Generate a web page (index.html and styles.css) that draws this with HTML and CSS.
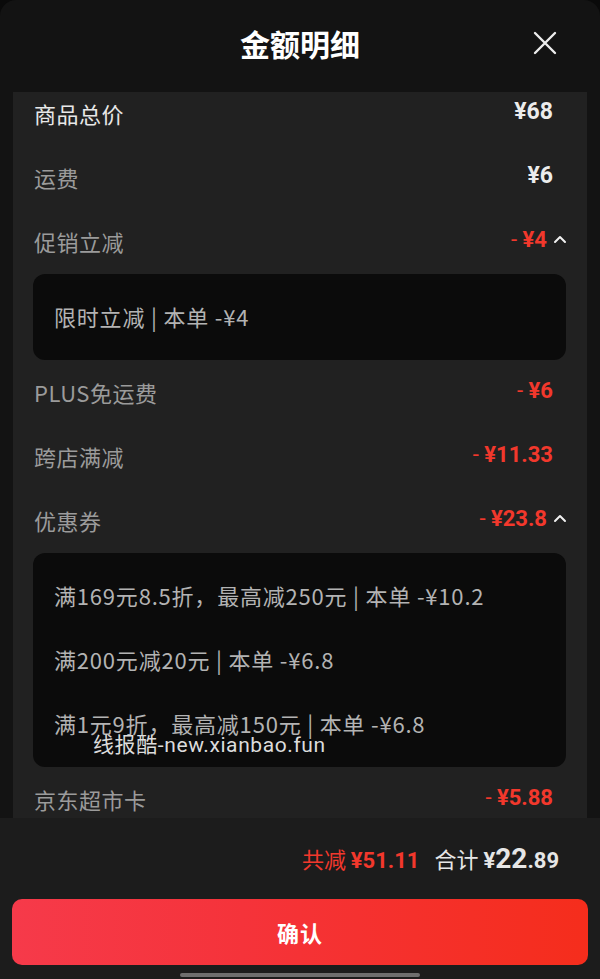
FILE: index.html
```html
<!DOCTYPE html>
<html lang="zh-CN">
<head>
<meta charset="utf-8">
<title>金额明细</title>
<link rel="stylesheet" href="styles.css">
</head>
<body>
<div class="sheet">
  <header class="header">
    <span class="spacer"></span>
    <h1 class="title">金额明细</h1>
    <button class="close" aria-label="关闭">
      <svg width="24" height="24" viewBox="0 0 24 24"><path d="M2 2 L22 22 M22 2 L2 22" stroke="#ededed" stroke-width="2.4" stroke-linecap="round" fill="none"/></svg>
    </button>
  </header>

  <section class="panel">
    <div class="row">
      <span class="label label-main">商品总价</span>
      <span class="value value-white">¥68</span>
    </div>
    <div class="row">
      <span class="label">运费</span>
      <span class="value value-white">¥6</span>
    </div>
    <div class="row">
      <span class="label">促销立减</span>
      <span class="value-group"><span class="value value-red"><span class="minus">-</span> ¥4</span><span class="chev"><svg width="14" height="10" viewBox="0 0 14 10"><path d="M2 8 L7 3 L12 8" stroke="#f0f0f0" stroke-width="2" fill="none" stroke-linecap="round" stroke-linejoin="round"/></svg></span></span>
    </div>
    <div class="detail">
      <p class="detail-line">限时立减 | 本单 -¥4</p>
    </div>
    <div class="row">
      <span class="label">PLUS免运费</span>
      <span class="value value-red"><span class="minus">-</span> ¥6</span>
    </div>
    <div class="row">
      <span class="label">跨店满减</span>
      <span class="value value-red"><span class="minus">-</span> ¥11.33</span>
    </div>
    <div class="row">
      <span class="label">优惠券</span>
      <span class="value-group"><span class="value value-red"><span class="minus">-</span> ¥23.8</span><span class="chev"><svg width="14" height="10" viewBox="0 0 14 10"><path d="M2 8 L7 3 L12 8" stroke="#f0f0f0" stroke-width="2" fill="none" stroke-linecap="round" stroke-linejoin="round"/></svg></span></span>
    </div>
    <div class="detail">
      <p class="detail-line">满169元8.5折，最高减250元 | 本单 -¥10.2</p>
      <p class="detail-line">满200元减20元 | 本单 -¥6.8</p>
      <p class="detail-line">满1元9折，最高减150元 | 本单 -¥6.8</p>
      <span class="watermark">线报酷-new.xianbao.fun</span>
    </div>
    <div class="row">
      <span class="label">京东超市卡</span>
      <span class="value value-red"><span class="minus">-</span> ¥5.88</span>
    </div>
  </section>

  <footer class="footer">
    <div class="summary">
      <span class="saved">共减 <span class="num">¥51.11</span></span>
      <span class="total">合计 <span class="num">¥<span class="big">22</span>.89</span></span>
    </div>
    <button class="confirm">确认</button>
    <div class="home-bar"></div>
  </footer>
</div>
</body>
</html>
```

FILE: styles.css
```css
* { box-sizing: border-box; }
html, body { margin: 0; padding: 0; background: #0a0a0a; }
body { font-family: "Noto Sans CJK SC", "Noto Sans", sans-serif; }

.sheet {
  width: 600px;
  height: 979px;
  background: #131313;
  border-radius: 16px 16px 0 0;
  display: flex;
  flex-direction: column;
  overflow: hidden;
}

.header {
  height: 92px;
  flex: none;
  display: grid;
  grid-template-columns: 80px 1fr 80px;
  align-items: center;
  padding-bottom: 6px;
}
.title {
  margin: 0;
  text-align: center;
  color: #ffffff;
  font-size: 30px;
  font-weight: 700;
}
.close {
  background: none;
  border: none;
  padding: 0;
  justify-self: start;
  margin-left: 13px;
  display: flex;
}

.panel {
  flex: none;
  height: 726px;
  margin: 0 13px;
  background: #212121;
  padding: 0 21px 0 20px;
  overflow: hidden;
  display: flex;
  flex-direction: column;
}

.row {
  flex: none;
  height: 46px;
  display: flex;
  align-items: center;
  justify-content: space-between;
  padding-left: 1px;
  margin-bottom: 18px;
}
.row + .detail { margin-top: -10px; }
.detail + .row { margin-top: 11px; }

.label {
  font-size: 22px;
  line-height: 30px;
  color: #9b9b9b;
  letter-spacing: 0.5px;
  margin-bottom: 4px;
}
.label-main { color: #e8e8e8; }

.value {
  font-family: "Roboto", "Noto Sans CJK SC", sans-serif;
  font-weight: 700;
  font-size: 22px;
  line-height: 28px;
  margin-right: 13px;
  margin-bottom: 7px;
}
.value-white { color: #ececec; font-size: 23px; }
.value-red { color: #f2382c; }
.minus { font-weight: 400; }

.value-group { display: flex; align-items: center; }
.value-group .value { margin-right: 0; }
.chev { display: flex; margin-left: 6px; margin-right: -1px; margin-bottom: 8px; }

.detail {
  position: relative;
  flex: none;
  background: #0b0b0b;
  border-radius: 12px;
  padding: 10px 21px 12px;
}
.detail-line {
  margin: 0;
  height: 64px;
  line-height: 64px;
  font-size: 22px;
  color: #b3b3b3;
  white-space: nowrap;
  letter-spacing: 0.8px;
}

.watermark {
  position: absolute;
  left: 60px;
  top: 179px;
  font-size: 21px;
  line-height: 26px;
  letter-spacing: 0.6px;
  color: #dcdcdc;
  font-family: "Roboto", "Noto Sans CJK SC", sans-serif;
  font-weight: 400;
}

.footer {
  flex: 1;
  background: #1c1c1c;
  display: flex;
  flex-direction: column;
  padding: 20px 12px 0;
}
.summary {
  height: 40px;
  display: flex;
  justify-content: flex-end;
  align-items: center;
  gap: 15px;
  padding-right: 29px;
}
.saved { color: #f2382c; font-size: 22px; }
.total { color: #e6e6e6; font-size: 22px; }
.num {
  font-family: "Roboto", "Noto Sans CJK SC", sans-serif;
  font-weight: 700;
  font-size: 22px;
}
.big { font-size: 28px; }

.confirm {
  margin-top: 21px;
  height: 66px;
  border: none;
  border-radius: 10px;
  background: linear-gradient(90deg, #f63a4a 0%, #f5333a 40%, #f52d1c 100%);
  color: #ffffff;
  font-family: "Noto Sans CJK SC", sans-serif;
  font-size: 22px;
  font-weight: 700;
  letter-spacing: 1px;
}
.home-bar {
  width: 240px;
  height: 4px;
  border-radius: 2px;
  background: #6e6e6e;
  align-self: center;
  margin-top: 8px;
}
```
